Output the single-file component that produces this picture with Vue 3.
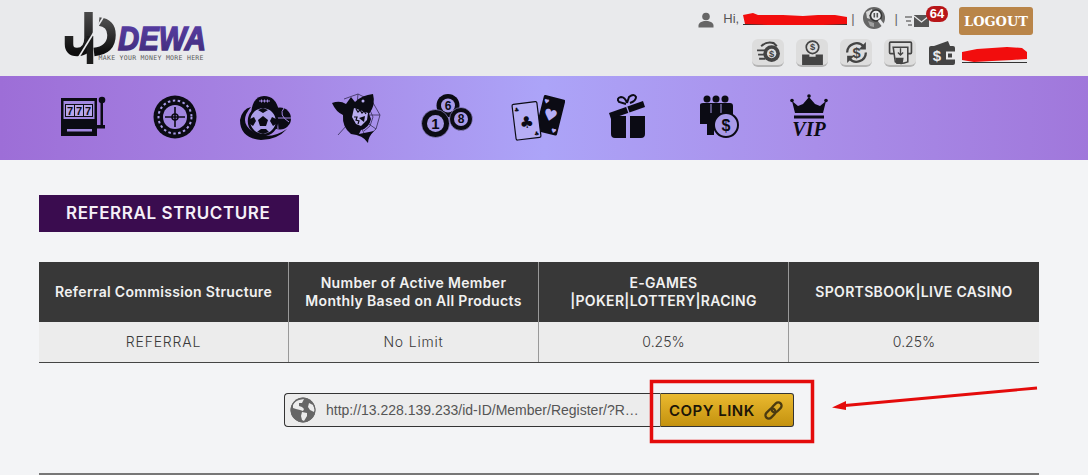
<script setup>
const topButtons = ['a', 'b', 'c', 'd']
const columns = [
  { head: ['Referral Commission Structure'], cell: 'REFERRAL', wide: true },
  { head: ['Number of Active Member', 'Monthly Based on All Products'], cell: 'No Limit', wide: true },
  { head: ['E-GAMES', '|POKER|LOTTERY|RACING'], cell: '0.25%', wide: false },
  { head: ['SPORTSBOOK|LIVE CASINO'], cell: '0.25%', wide: false }
]
</script>

<template>
  <div class="page">
    <header class="header">
      <svg class="logo" viewBox="60 8 150 60" width="150" height="60">
        <defs>
          <linearGradient id="lgDark" x1="0" y1="0" x2="0" y2="1"><stop offset="0" stop-color="#4a4a4a"/><stop offset="1" stop-color="#0e0e0e"/></linearGradient>
          <linearGradient id="lgPur" x1="0" y1="0" x2="0" y2="1"><stop offset="0" stop-color="#5a3fa8"/><stop offset="1" stop-color="#3f2c78"/></linearGradient>
        </defs>
        <path d="M88.500 12V38Q88.500 52 77 52Q69 52 69 44V36" fill="none" stroke="url(#lgDark)" stroke-width="8.500"/>
        <path d="M90 36V64" fill="none" stroke="#1c1c1c" stroke-width="6.500"/>
        <path d="M99 21.500Q111.500 23 111.500 35Q111.500 50 94 52" fill="none" stroke="url(#lgDark)" stroke-width="8.500"/>
        <path d="M104 16L77 60" stroke="#e9eaec" stroke-width="1.600"/>
        <text x="118" y="50" textLength="88" lengthAdjust="spacingAndGlyphs" class="logo-name" fill="url(#lgPur)" stroke="url(#lgPur)" stroke-width="1.500">DEWA</text>
        <text x="98.500" y="60" textLength="105" lengthAdjust="spacing" class="logo-tag">MAKE YOUR MONEY MORE HERE</text>
      </svg>

      <div class="account">
        <div class="row-one">
          <svg class="user-icon" viewBox="0 0 16 16" width="16" height="16"><circle cx="8" cy="4.500" r="3.800" fill="#666"/><path d="M0.500 15.500V13Q1 10 6 9H10Q15 10 15.500 13V15.500Z" fill="#666"/></svg>
          <span class="hi">Hi,</span>
          <span class="name">
            <svg class="scribble" viewBox="0 0 104 12" width="104" height="12" preserveAspectRatio="none"><path d="M0 2L10 0L15 2L40 2L60 3L75 2L92 2L104 4L104 11L80 12L50 12L25 12L2 11Z" fill="#f20d0d"/></svg>
          </span>
          <span class="sep first">|</span>
          <svg class="globe-search" viewBox="0 0 24 24" width="24" height="24">
            <circle cx="12" cy="12" r="11" fill="#666"/>
            <path d="M4 6L10 3L11 7L7 9L8 13L5 12Z" fill="#d8d8d8"/>
            <path d="M6 15L12 17L12 21L8 20Z" fill="#a0a0a0"/>
            <circle cx="14" cy="9.500" r="5.500" fill="#e9eaec" stroke="#333" stroke-width="1.500"/>
            <path d="M17 14L21.500 20" stroke="#e9eaec" stroke-width="3"/>
            <rect x="11.500" y="7" width="1.600" height="4.500" fill="#555"/><rect x="14.500" y="7" width="1.600" height="4.500" fill="#555"/>
          </svg>
          <span class="sep second">|</span>
          <span class="mail">
            <svg viewBox="0 0 26 14" width="26" height="14">
              <path d="M0 3H7M1 7H6M3 11H7" stroke="#777" stroke-width="1.300"/>
              <path d="M9 1H24V13H9Z" fill="#555"/>
              <path d="M9 2L16.500 8L24 2" fill="none" stroke="#e9eaec" stroke-width="1.200"/>
            </svg>
            <b class="badge">64</b>
          </span>
          <button class="logout">LOGOUT</button>
        </div>
        <div class="row-two">
          <span v-for="b in topButtons" :key="b" class="tool">
            <svg v-if="b === 'a'" viewBox="0 0 24 24" width="24" height="24">
              <circle cx="15" cy="13" r="8" fill="#444"/><circle cx="15" cy="13" r="4.500" fill="#ddd"/>
              <text x="15" y="16" class="mini">$</text>
              <path d="M1 10H9M2 14H8M3 18H9" stroke="#444" stroke-width="1.800"/>
              <path d="M5 6Q10 1 17 3L20 6" fill="none" stroke="#444" stroke-width="2"/>
            </svg>
            <svg v-else-if="b === 'b'" viewBox="0 0 24 24" width="24" height="24">
              <circle cx="12" cy="7" r="6" fill="none" stroke="#444" stroke-width="1.600"/>
              <text x="12" y="10" class="mini">$</text>
              <path d="M2 14H9V16H15V14H22V25H2Z" fill="#444"/>
            </svg>
            <svg v-else-if="b === 'c'" viewBox="0 0 24 24" width="24" height="24">
              <path d="M3 12A9 9 0 0 1 19 6.500" fill="none" stroke="#444" stroke-width="2.200"/>
              <path d="M21 12A9 9 0 0 1 5 17.500" fill="none" stroke="#444" stroke-width="2.200"/>
              <path d="M21 2V9H14ZM3 22V15H10Z" fill="#444"/>
              <text x="12" y="17" class="mid">$</text>
            </svg>
            <svg v-else viewBox="0 0 24 24" width="24" height="24">
              <rect x="1.500" y="2" width="21" height="11" rx="1" fill="none" stroke="#444" stroke-width="1.600"/>
              <path d="M5 7H19V21Q12 24 7 21Z" fill="#ddd" stroke="#444" stroke-width="1.500"/>
              <path d="M12 8V14M9.500 12L12 14.500L14.500 12" fill="none" stroke="#444" stroke-width="1.300"/>
              <path d="M7 17H15L14 23H8Z" fill="#444"/>
            </svg>
          </span>
          <svg class="wallet" viewBox="0 0 26 24" width="26" height="24">
            <path d="M5 5L19 0L21 5Z" fill="#444"/>
            <rect x="0" y="5" width="26" height="19" rx="2" fill="#444"/>
            <text x="8" y="20" class="wallet-s">$</text>
            <rect x="17" y="10.500" width="9" height="8" fill="#e9eaec"/><rect x="19" y="12.500" width="4" height="4" fill="#444"/>
          </svg>
          <span class="balance">
            <svg class="scribble" viewBox="0 0 65 15" width="65" height="15" preserveAspectRatio="none"><path d="M0 5L15 2L30 1L45 0L60 1L65 5L65 12L50 13L30 14L12 15L0 13Z" fill="#f20d0d"/></svg>
          </span>
        </div>
      </div>
    </header>

    <nav class="nav">
      <a class="nav-item">
        <svg viewBox="0 0 52 52" width="52" height="52">
          <path d="M3 7H39V45H3Z" fill="#0b0b14"/>
          <rect x="5.500" y="10" width="31" height="18" fill="#a187e0"/>
          <rect x="7" y="13" width="28" height="13" fill="#0b0b14"/>
          <rect x="8" y="14" width="8" height="11" fill="#b7a5ea"/><rect x="17" y="14" width="8" height="11" fill="#b7a5ea"/><rect x="26" y="14" width="8" height="11" fill="#b7a5ea"/>
          <text x="12" y="24" class="seven">7</text><text x="21" y="24" class="seven">7</text><text x="30" y="24" class="seven">7</text>
          <rect x="9" y="38" width="25" height="2.500" fill="#a187e0"/>
          <rect x="42.500" y="10" width="2.500" height="27" fill="#0b0b14"/>
          <circle cx="44" cy="9" r="3.300" fill="#0b0b14"/>
          <rect x="38" y="34" width="9" height="3.500" fill="#0b0b14"/>
        </svg>
      </a>
      <a class="nav-item">
        <svg viewBox="0 0 52 52" width="52" height="52">
          <circle cx="26" cy="26" r="21.500" fill="#0b0b14"/>
          <circle cx="26" cy="26" r="16.500" fill="none" stroke="#a89ae8" stroke-width="2" stroke-dasharray="2.500 2.500"/>
          <circle cx="26" cy="26" r="13" fill="#0b0b14"/>
          <circle cx="26" cy="26" r="12" fill="#a187e0"/>
          <circle cx="26" cy="26" r="3" fill="none" stroke="#0b0b14" stroke-width="1.500"/>
          <path d="M26 16V36M16 26H36" stroke="#0b0b14" stroke-width="1.600"/>
        </svg>
      </a>
      <a class="nav-item">
        <svg viewBox="0 0 52 52" width="52" height="52">
          <path d="M12 22Q14 5 25 5Q37 5 40 20Z" fill="#0b0b14"/>
          <path d="M20 10H31M22.500 8.500V11.500M25.500 8.500V11.500M28.500 8.500V11.500" stroke="#a187e0" stroke-width="1"/>
          <circle cx="41" cy="27.500" r="11" fill="#0b0b14"/>
          <path d="M32 22Q39 26 39 38M45 17Q39 24 50 31M31 27H52" stroke="#a187e0" stroke-width="1" fill="none"/>
          <path d="M1 29Q3 18 12 16Q-1 31 14 41Q30 50 48 38Q38 49 22 49Q1 47 1 29Z" fill="#0b0b14"/>
          <circle cx="24" cy="30" r="14" fill="#ac9fea" stroke="#0b0b14" stroke-width="2.500"/>
          <path d="M24 25L29 29L27 35H21L19 29Z" fill="#0b0b14"/>
          <path d="M19 19L24 22L29 19L24 17ZM11 28L15 26L17 30L14 35L11 33ZM37 28L33 26L31 30L34 35L37 33ZM18 41L22 38H27L30 41L24 43Z" fill="#0b0b14"/>
        </svg>
      </a>
      <a class="nav-item">
        <svg viewBox="0 0 52 52" width="52" height="52">
          <g fill="none" stroke="#352c55" stroke-width=".8">
            <path d="M14 8L28 3L42 10L50 24L46 38L36 47M20 14L30 10L39 17L43 26L40 35L34 40"/>
            <path d="M26 24L28 3M26 24L42 10M26 24L50 24M26 24L46 38M26 24L36 47M8 44L26 24"/>
          </g>
          <path d="M2 12Q10 9 16 13L21 6L25 11Q32 4 43 3Q46 14 39 23L41 28Q39 37 31 39L29 43L44 40Q38 46 38 52Q33 44 21 43Q12 36 13 24Q6 21 2 12Z" fill="#0b0b14"/>
          <path d="M24 17L38 22L37 29L31 35L26 33L22 26Z" fill="#b9aef0"/>
          <path d="M26 18L28 21L30 19L32 22L34 20L36 23M24 26L27 26L26 29L29 30L28 33" fill="none" stroke="#0b0b14" stroke-width="1.200"/>
          <path d="M29 27L35 25L34 31Z" fill="#0b0b14"/>
          <circle cx="33" cy="10" r="1.500" fill="#b9aef0"/>
        </svg>
      </a>
      <a class="nav-item">
        <svg viewBox="0 0 52 52" width="52" height="52">
          <circle cx="27" cy="14.500" r="11.500" fill="#0b0b14"/>
          <circle cx="14.500" cy="32.500" r="14" fill="#0b0b14" stroke="#a89ae8" stroke-width=".6"/>
          <circle cx="40" cy="28" r="11.500" fill="#0b0b14" stroke="#a89ae8" stroke-width=".6"/>
          <circle cx="27" cy="14.500" r="7" fill="#a89ae8"/><circle cx="14.500" cy="32.500" r="8.500" fill="#a89ae8"/><circle cx="40" cy="28" r="7" fill="#a89ae8"/>
          <text x="27" y="19" class="ball small-ball">6</text><text x="14.500" y="38" class="ball">1</text><text x="40" y="32" class="ball small-ball">8</text>
        </svg>
      </a>
      <a class="nav-item">
        <svg viewBox="0 0 56 52" width="56" height="52">
          <g transform="rotate(14 42 26)">
            <rect x="30" y="6" width="22" height="37" rx="1.500" fill="#0b0b14"/>
            <text x="41" y="30" class="suit dark">♥</text>
            <text x="34" y="14" class="pip dark">♥</text><text x="48" y="41" class="pip dark">♥</text>
          </g>
          <g transform="rotate(-7 16 30)">
            <rect x="5" y="12" width="25" height="36" rx="1.500" fill="#b6aef5" stroke="#0b0b14" stroke-width="1.200"/>
            <text x="17.500" y="37" class="suit">♣</text>
            <text x="9" y="20" class="pip">♣</text><text x="26" y="46" class="pip">♣</text>
          </g>
        </svg>
      </a>
      <a class="nav-item">
        <svg viewBox="0 0 52 52" width="52" height="52">
          <path d="M9 25H24V47H13Q9 47 9 43ZM28 25H43V43Q43 47 39 47H28Z" fill="#0b0b14"/>
          <path d="M7 22L41 10L43 16L9 28Z" fill="#0b0b14"/>
          <path d="M24 13L17 11Q14 7 19 6Q23 6 25 12M25 12L27 6Q32 2 34 6Q34 10 28 12" fill="none" stroke="#0b0b14" stroke-width="2"/>
          <path d="M24.500 15L27 22V47" fill="none" stroke="#a89ae8" stroke-width="1.300"/>
        </svg>
      </a>
      <a class="nav-item">
        <svg viewBox="0 0 52 52" width="52" height="52">
          <circle cx="15" cy="8" r="3.500" fill="#0b0b14"/><circle cx="24" cy="8" r="3.500" fill="#0b0b14"/><circle cx="33" cy="8" r="3.500" fill="#0b0b14"/>
          <path d="M8 14Q8 12 11 12H38Q41 12 41 15V25H30V30H22V44H15V33H8Z" fill="#0b0b14"/>
          <path d="M19 13V22M29 13V22" stroke="#a89ae8" stroke-width="1"/>
          <circle cx="34" cy="34" r="12" fill="#a89ae8" stroke="#0b0b14" stroke-width="2"/>
          <text x="34" y="40" class="dollar">$</text>
        </svg>
      </a>
      <a class="nav-item">
        <svg viewBox="0 0 52 52" width="52" height="52">
          <path d="M9 10L15 15L20 13L26 6L32 13L37 15L43 10L40 22H12Z" fill="#0b0b14"/>
          <circle cx="9" cy="9.500" r="1.800" fill="#0b0b14"/><circle cx="26" cy="5" r="1.800" fill="#0b0b14"/><circle cx="43" cy="9.500" r="1.800" fill="#0b0b14"/>
          <rect x="11" y="24.500" width="30" height="3" fill="#0b0b14"/>
          <text x="26" y="45" class="vip">VIP</text>
        </svg>
      </a>
    </nav>

    <main class="main">
      <h1 class="title">REFERRAL STRUCTURE</h1>

      <div class="table">
        <div v-for="c in columns" :key="c.head[0]" class="col">
          <div class="th"><span v-for="line in c.head" :key="line">{{ line }}</span></div>
          <div class="td" :class="{ wide: c.wide }">{{ c.cell }}</div>
        </div>
      </div>

      <div class="link-row">
        <div class="link-box">
          <svg class="earth" viewBox="0 0 26 26" width="26" height="26">
            <circle cx="13" cy="13" r="12.500" fill="#666"/>
            <path d="M3 8Q5 4 9 3L14 2L12 6L9 6L9 9L12 10L14 12L13 14L10 13L6 12L3 11ZM12 15L17 16L17 19L14 24L12 23L11 19ZM19 6L23 8L25 13L24 15L20 13L18 10Z" fill="#ececec"/>
            <circle cx="13" cy="13" r="12" fill="none" stroke="#666" stroke-width="1"/>
          </svg>
          <span class="url">http://13.228.139.233/id-ID/Member/Register/?R…</span>
        </div>
        <button class="copy">
          COPY LINK
          <svg viewBox="0 0 22 22" width="21" height="21">
            <g transform="rotate(-45 11 11)" fill="none" stroke="#4a3a10" stroke-width="2.400">
              <rect x="0.500" y="7.500" width="12" height="7" rx="3.500"/>
              <rect x="9.500" y="7.500" width="12" height="7" rx="3.500"/>
            </g>
          </svg>
        </button>
      </div>

      <div class="next-section"></div>
    </main>

    <svg class="annotation" viewBox="0 0 1088 475" width="1088" height="475">
      <rect x="651.500" y="381.500" width="161" height="60" fill="none" stroke="#e40b0b" stroke-width="3.500"/>
      <path d="M1037 388L845 405.500" stroke="#e40b0b" stroke-width="2.800"/>
      <path d="M832 407.500L846 401L846 410Z" fill="#e40b0b"/>
    </svg>
  </div>
</template>

<style>
html, body { margin: 0; background: #f3f4f6; overflow: hidden; }
</style>

<style scoped>
.page {
  position: relative;
  width: 1088px;
  height: 475px;
  overflow: hidden;
  background: #f3f4f6;
  font-family: "Inter", "Open Sans", sans-serif;
}
.header {
  height: 76px;
  box-sizing: border-box;
  display: flex;
  justify-content: space-between;
  background: #e9eaec;
  padding: 7px 55px 0 60px;
}
.logo { display: block; margin-top: 1px; overflow: visible; }
.logo-name { font: italic 700 33px "Liberation Sans", sans-serif; }
.logo-tag { font: 400 6.500px "DejaVu Sans Mono", monospace; fill: #5a5a5a; }
.account { display: flex; flex-direction: column; align-items: flex-end; }
.row-one { display: flex; align-items: center; height: 28px; color: #666; }
.user-icon { margin-right: 9px; margin-top: -3px; }
.hi { font: 13px "Liberation Sans", sans-serif; color: #555; margin-top: -6px; }
.name {
  position: relative;
  display: block;
  width: 104px;
  height: 11px;
  margin: -5px 0 0 4px;
  border-bottom: 1px solid #333;
}
.scribble { position: absolute; left: 0; top: 0; display: block; }
.sep { font: 13px "Liberation Sans", sans-serif; color: #666; margin-top: -5px; }
.sep.first { margin-left: 4px; }
.globe-search { margin: -6px 0 0 7px; }
.sep.second { margin-left: 9px; }
.mail { position: relative; display: block; width: 26px; height: 14px; margin: -1px 28px 0 7px; }
.mail svg { display: block; }
.badge {
  position: absolute;
  left: 21px;
  top: -8px;
  width: 22px;
  height: 16px;
  border-radius: 8px;
  background: #b71518;
  color: #fff;
  font: 700 13px/16px "Liberation Sans", sans-serif;
  text-align: center;
}
.logout {
  width: 74px;
  height: 28px;
  padding: 0;
  border: 0;
  border-radius: 3px;
  background: #b98549;
  color: #fff;
  font: 700 13px "DejaVu Serif", serif;
}
.row-two { display: flex; align-items: center; margin: 4px 6px 0 0; }
.tool {
  width: 32px;
  height: 28px;
  margin-right: 12px;
  display: flex;
  align-items: center;
  justify-content: center;
  overflow: hidden;
  box-sizing: border-box;
  border-radius: 6px;
  background: #dddddd;
  border-bottom: 2px solid #b4b4b4;
}
.tool svg { width: 25px; height: 25px; }
.mini { font: 700 9px "Liberation Sans", sans-serif; fill: #444; text-anchor: middle; }
.mid { font: 700 14px "Liberation Sans", sans-serif; fill: #444; text-anchor: middle; }
.wallet { margin-left: 1px; }
.wallet-s { font: 700 15px "Liberation Sans", sans-serif; fill: #e9eaec; text-anchor: middle; }
.balance { position: relative; display: block; width: 65px; height: 15px; margin: 4px 0 0 7px; border-bottom: 1px solid #333; }

.nav {
  height: 84px;
  box-sizing: border-box;
  display: flex;
  align-items: center;
  padding: 0 0 3px 39px;
  background: linear-gradient(90deg, #9d6ed7 0%, #a685e4 25%, #aca4f8 50%, #a98ee9 75%, #a077db 100%);
}
.nav-item { width: 90.600px; display: flex; justify-content: center; }
.nav-item svg { display: block; }
.seven { font: 700 11px "Liberation Sans", sans-serif; fill: #0b0b14; text-anchor: middle; }
.ball { font: 700 15px "Liberation Sans", sans-serif; fill: #0b0b14; text-anchor: middle; }
.small-ball { font-size: 12px; }
.suit { font: 16px "DejaVu Sans", sans-serif; fill: #0b0b14; text-anchor: middle; }
.suit.dark { fill: #b6aef5; }
.pip { font: 6px "DejaVu Sans", sans-serif; fill: #0b0b14; text-anchor: middle; }
.pip.dark { fill: #b6aef5; }
.dollar { font: 700 16px "Liberation Sans", sans-serif; fill: #0b0b14; text-anchor: middle; }
.vip { font: italic 700 20px "Liberation Serif", serif; fill: #0b0b14; text-anchor: middle; }

.main { padding: 35px 49px 0 39px; }
.title {
  width: 260px;
  height: 37px;
  margin: 0;
  box-sizing: border-box;
  padding-left: 27px;
  background: #3a0c4f;
  color: #f5f0f8;
  font-size: 17px;
  font-weight: 600;
  line-height: 37px;
  letter-spacing: .6px;
}
.table { display: flex; margin-top: 30px; border-bottom: 1px solid #444; }
.col { width: 250px; box-sizing: border-box; border-right: 1px solid #999; }
.col:last-child { border-right: 0; }
.th {
  height: 60px;
  display: flex;
  flex-direction: column;
  align-items: center;
  justify-content: center;
  background: #383838;
  color: #f1f1f1;
  font-size: 14px;
  font-weight: 600;
  line-height: 18px;
  letter-spacing: .32px;
  white-space: nowrap;
}
.td {
  height: 40px;
  background: #ececec;
  color: #3a3a3a;
  font-size: 14px;
  font-weight: 300;
  line-height: 39px;
  text-align: center;
}
.td.wide { letter-spacing: .8px; }
.link-row { display: flex; margin: 30px 0 0 245px; }
.link-box {
  width: 376px;
  height: 34px;
  box-sizing: border-box;
  display: flex;
  align-items: center;
  padding: 0 5px;
  border: 1px solid #333;
  border-right: 0;
  border-radius: 4px 0 0 4px;
  background: #ececec;
}
.earth { flex: none; margin-right: 10px; }
.url {
  white-space: nowrap;
  color: #555;
  font: 14px "Liberation Sans", sans-serif;
}
.copy {
  width: 134px;
  height: 34px;
  box-sizing: border-box;
  display: flex;
  align-items: center;
  gap: 8px;
  padding: 0 0 0 8px;
  border: 1px solid #333;
  border-left: 1px solid #8a7330;
  border-radius: 0 3px 3px 0;
  background: linear-gradient(#eab92f, #c4920f);
  color: #1d1608;
  font: 600 15px "Inter", sans-serif;
  letter-spacing: .5px;
  white-space: nowrap;
}
.next-section { margin-top: 46px; height: 10px; border-top: 2px solid #777; border-right: 1px solid #777; }
.annotation { position: absolute; left: 0; top: 0; pointer-events: none; }
</style>
